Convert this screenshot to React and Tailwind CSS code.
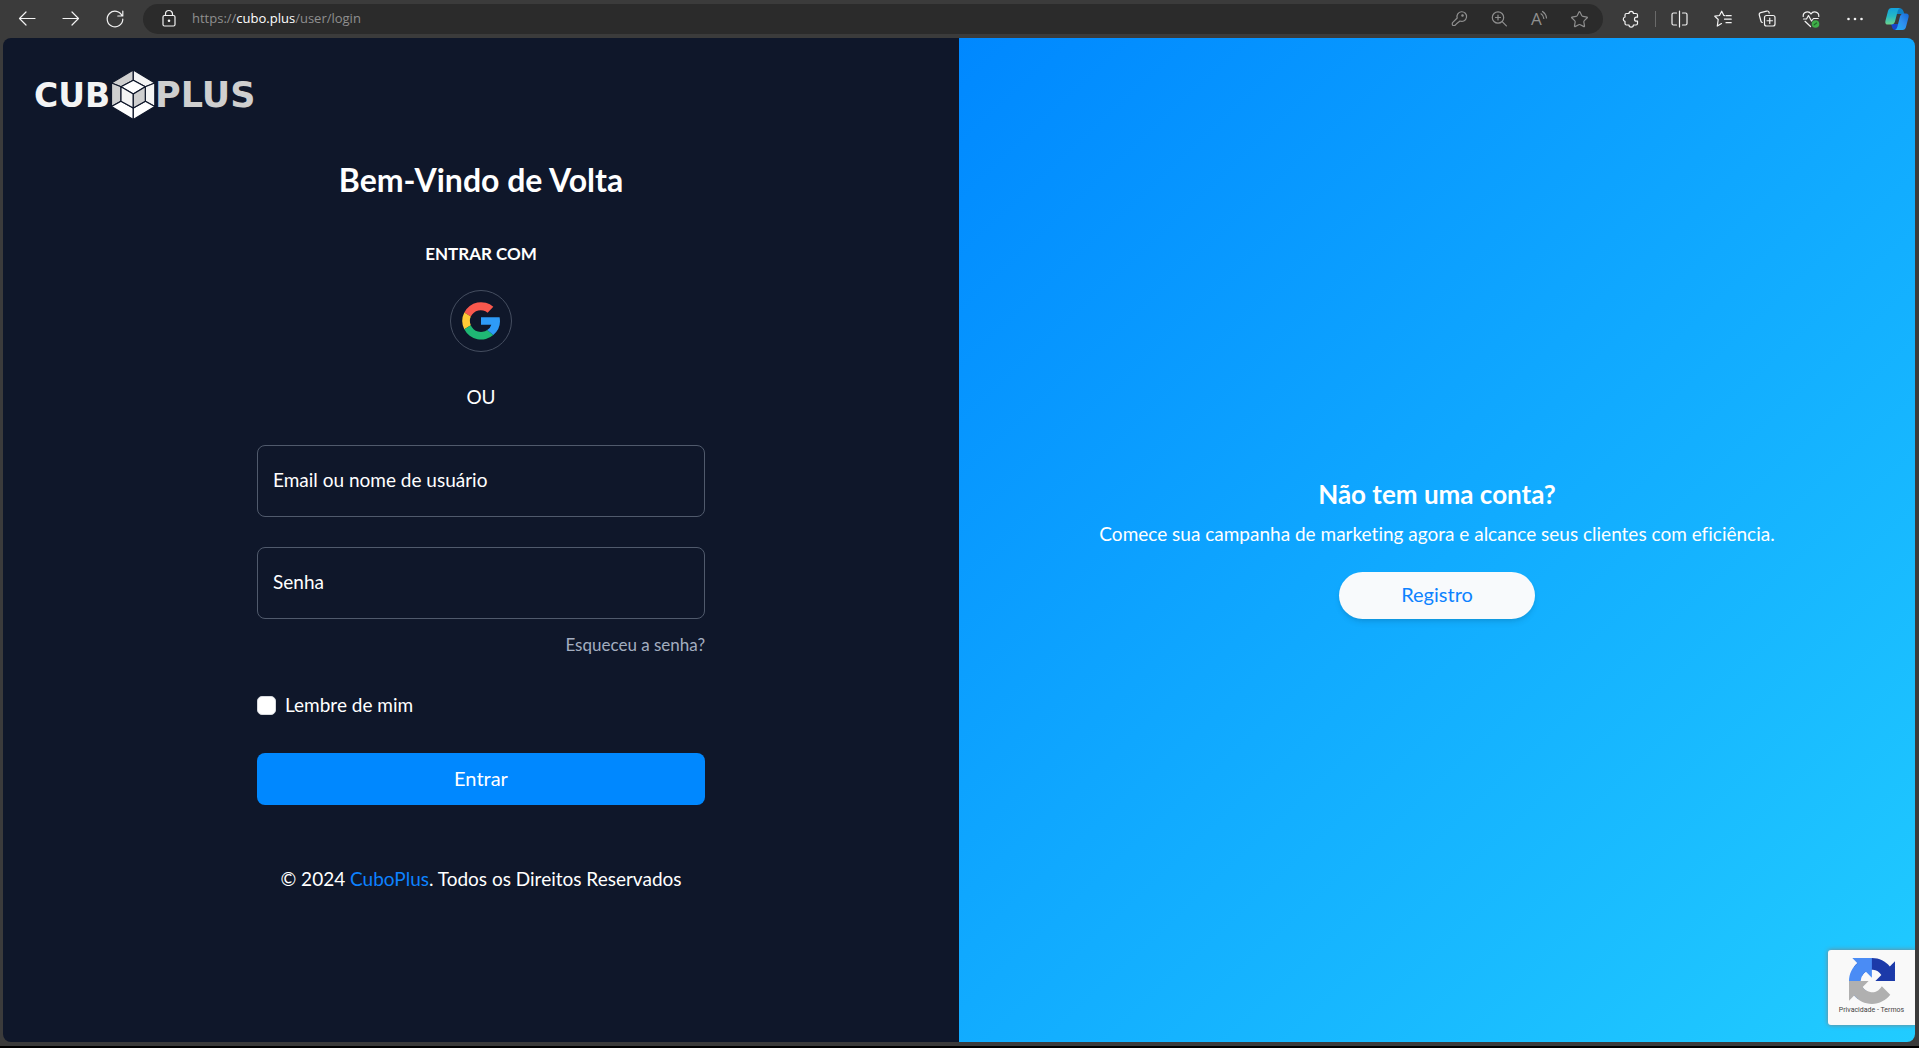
import React, { useState } from 'react';
import { Star } from 'lucide-react';

const Icon = ({ children }) => (
  <svg width="24" height="24" viewBox="0 0 24 24" fill="none" stroke="currentColor" strokeWidth="1.2"
    strokeLinecap="round" strokeLinejoin="round" aria-hidden="true">
    {children}
  </svg>
);

const toolButton = 'flex h-8 w-11 shrink-0 items-center justify-center text-[#f2f2f2]';
const urlButton = 'flex h-8 w-10 shrink-0 items-center justify-center text-[#8f8f8f]';

const BrowserBar = () => (
  <header className="flex h-[38px] shrink-0 items-center pl-[5px] pr-[2px]">
    <button aria-label="Voltar" className={toolButton}>
      <Icon><path d="M20 11.5H4.5M11 5l-6.5 6.5L11 18" /></Icon>
    </button>
    <button aria-label="Avançar" className={toolButton}>
      <Icon><path d="M4 11.5h15.5M13 5l6.5 6.5L13 18" /></Icon>
    </button>
    <button aria-label="Atualizar" className={toolButton}>
      <Icon><path d="M19.2 9A7.8 7.8 0 1 0 19.8 12M19.8 4v5h-5" /></Icon>
    </button>

    {/* Address bar */}
    <div className="ml-[6px] flex h-[30px] min-w-0 flex-1 items-center rounded-full bg-[#2b2b2b] pl-[14px] pr-1">
      <span className="mr-[11px] text-[#f2f2f2]">
        <Icon>
          <rect x="6" y="8.5" width="12" height="10.5" rx="1.5" />
          <path d="M8.5 8.5V7a3.5 3.5 0 0 1 7 0v1.5" />
          <circle cx="12" cy="13.7" r=".7" fill="currentColor" />
        </Icon>
      </span>
      <p className="flex-1 truncate font-['Open_Sans',sans-serif] text-[13px] text-[#8f8f8f]">
        https://<span className="text-white">cubo.plus</span>/user/login
      </p>
      <button aria-label="Senhas" className={urlButton}>
        <Icon>
          <path d="M10.2 11l-4.6 4.6a1 1 0 0 0-.3.7v1.2a1 1 0 0 0 1 1h1.5l1.7-1.7 3.5-2.8a4.8 4.8 0 1 0-2.8-3z" />
          <circle cx="15.5" cy="8.5" r=".7" fill="currentColor" />
        </Icon>
      </button>
      <button aria-label="Zoom" className={urlButton}>
        <Icon>
          <circle cx="11" cy="10.5" r="5.7" />
          <path d="M15.2 14.7l4.2 4.2M11 8v5M8.5 10.5h5" />
        </Icon>
      </button>
      <button aria-label="Ler em voz alta" className={urlButton}>
        <Icon>
          <text x="4" y="18" fontSize="17" fontFamily="Open Sans, sans-serif" fill="currentColor" stroke="none">A</text>
          <path d="M14 6.8a6 6 0 0 1 2.8 4.7M15.5 4.5a9 9 0 0 1 4 6.5" />
        </Icon>
      </button>
      <button aria-label="Adicionar aos favoritos" className={urlButton}>
        <Star size={19} strokeWidth={1.5} />
      </button>
    </div>

    <button aria-label="Extensões" className={`${toolButton} ml-[6px]`}>
      <Icon>
        <path d="M7.5 6.5H10a2.2 2.2 0 0 1 4.4 0H17A1.5 1.5 0 0 1 18.5 8v2.2h-1a2 2 0 0 0 0 4h1v2.3A1.5 1.5 0 0 1 17 18h-2.6a2.2 2.2 0 0 1-4.4 0H7.5A1.5 1.5 0 0 1 6 16.5v-2.2a2.2 2.2 0 0 1 0-4.3V8a1.5 1.5 0 0 1 1.5-1.5z" />
      </Icon>
    </button>
    <span className="ml-[2px] mr-px h-4 w-px shrink-0 bg-[#6a6a6a]"></span>
    <button aria-label="Dividir tela" className={toolButton}>
      <Icon>
        <path d="M9.5 6h-3A1.5 1.5 0 0 0 5 7.5v9A1.5 1.5 0 0 0 6.5 18h3M15.5 6h3A1.5 1.5 0 0 1 20 7.5v9a1.5 1.5 0 0 1-1.5 1.5h-3M12.5 4v16" />
      </Icon>
    </button>
    <button aria-label="Favoritos" className={toolButton}>
      <Icon>
        <path d="M13.5 8.7l-.7-.2-2.1-4.3-2.2 4.3-4.7.7 3.4 3.3-.9 6.6 4.2-2.5M15 8.7h5.2M13.5 12.2h6.7M15 15.7h5.2" />
      </Icon>
    </button>
    <button aria-label="Coleções" className={toolButton}>
      <Icon>
        <rect x="9.5" y="8.5" width="10.5" height="10.5" rx="2" />
        <path d="M14.75 11v5.5M12 13.75h5.5M7.3 15.5A2 2 0 0 1 5.9 14L4.3 8a2 2 0 0 1 1.4-2.4l6-1.5a2 2 0 0 1 2.4 1.4l.1.6" />
      </Icon>
    </button>
    <button aria-label="Desempenho" className={toolButton}>
      <Icon>
        <path d="M4.2 9.5A4.2 4.2 0 0 1 12 7a4.2 4.2 0 0 1 7.8 2.5M4.5 12h3l2-3.5 3 5.5 2-2.5h4.7M6 14.3l5.5 5.2" />
        <circle cx="16.5" cy="17" r="3.8" fill="#3fae49" stroke="none" />
        <path d="M15.2 17.8l2.4-1.8" stroke="#22662a" />
      </Icon>
    </button>
    <button aria-label="Configurações" className={toolButton}>
      <Icon>
        <g fill="currentColor" stroke="none">
          <circle cx="5.5" cy="12" r="1.3" />
          <circle cx="12" cy="12" r="1.3" />
          <circle cx="18.5" cy="12" r="1.3" />
        </g>
      </Icon>
    </button>
    <button aria-label="Copilot" className="flex h-8 w-10 shrink-0 items-center justify-center">
      <svg width="28" height="26" viewBox="0 0 28 26" aria-hidden="true">
        <defs>
          <linearGradient id="cpLeft" x1="0" y1="0" x2="0" y2="1">
            <stop offset="0" stopColor="#12a2e0" />
            <stop offset=".5" stopColor="#25b9c4" />
            <stop offset="1" stopColor="#6cd38c" />
          </linearGradient>
          <linearGradient id="cpRight" x1="1" y1="0" x2="0" y2="1">
            <stop offset="0" stopColor="#1668d8" />
            <stop offset=".5" stopColor="#2f8fee" />
            <stop offset="1" stopColor="#1fb4f5" />
          </linearGradient>
        </defs>
        <path d="M14 2h2q3.5 0 4.5 3.5l.9 2.5H12z" fill="#0f7fc4" />
        <path d="M8 18h7l1.5 6H12q-2.3 0-3-3z" fill="#1744c9" />
        <path d="M8.5 2H17q-1.5.5-2.3 3L12 15.5q-.9 3-3.7 3H5q-3.3 0-2.6-3.6L5 5q.8-3 3.5-3z" fill="url(#cpLeft)" />
        <path d="M19.5 24H12q1.5-.5 2.3-3L17 10.5q.9-3 3.7-3H23q3.3 0 2.6 3.6L23 21q-.8 3-3.5 3z" fill="url(#cpRight)" />
      </svg>
    </button>
  </header>
);

const Logo = () => (
  <svg width="222" height="50" viewBox="0 0 222 50" role="img" aria-label="CuboPlus">
    <g fontFamily="DejaVu Sans, sans-serif" fontWeight="700">
      <text x="-1" y="37" fontSize="33" fill="#f4f4f4">CUB</text>
      <text x="120" y="37" fontSize="35" fill="#cfcfcf">PLUS</text>
    </g>
    <g stroke="#0f172a" strokeWidth="1.2" strokeLinejoin="round">
      <path d="M98.3 0L76.5 13l9.5 3.7 12.3-6.4z" fill="#cfcfcf" />
      <path d="M98.3 0l21.5 13-9.5 3.7-12-6.4z" fill="#f4f4f4" />
      <path d="M76.5 13v23.5l9.5-5.2V16.7z" fill="#cfcfcf" />
      <path d="M119.8 13v23.5l-9.5-5.2V16.7z" fill="#f4f4f4" />
      <path d="M76.5 36.5L98.3 49.5V38L86 31.3z" fill="#fff" />
      <path d="M119.8 36.5L98.3 49.5V38l12-6.7z" fill="#fff" />
      <path d="M98.3 10.3l12 6.4-12 7.3L86 16.7z" fill="#fff" />
      <path d="M86 16.7L98.3 24v14L86 31.3z" fill="#f4f4f4" />
      <path d="M110.3 16.7L98.3 24v14l12-6.7z" fill="#cfcfcf" />
    </g>
  </svg>
);

const GoogleLogo = () => (
  <svg width="38" height="38" viewBox="0 0 38 38" aria-hidden="true">
    <path d="M2.3 10.5A18.7 18.7 0 0 1 31.3 4.8L25.6 10.7A11 11 0 0 0 8.8 14.5z" fill="#f9584d" />
    <path d="M2.3 10.5L8.8 14.5A11 11 0 0 0 8.8 23.2L2.3 27.3A18.7 18.7 0 0 1 2.3 10.5z" fill="#ffca36" />
    <path d="M2.3 27.3L8.8 23.2A11 11 0 0 0 25.2 28L31.3 33A18.7 18.7 0 0 1 2.3 27.3z" fill="#1fb874" />
    <path d="M19 15.2H37.6A18.8 18.8 0 0 1 31.3 33L25.2 28Q28.4 26 29.3 22.7H19z" fill="#2e9bf7" />
  </svg>
);

const Recaptcha = () => (
  <div className="absolute right-0 bottom-[17px] flex h-[75px] w-[87px] flex-col items-center rounded-l-[3px] bg-[#f9f9f9] pt-2 shadow-[0_0_5px_#808080]">
    <svg width="46" height="46" viewBox="0 0 64 64" aria-hidden="true">
      <path d="M64 31.955l-.033-1.37V4.687l-7.16 7.16C50.948 4.674 42.033.093 32.05.093c-10.4 0-19.622 4.96-25.458 12.64l11.736 11.86a15.55 15.55 0 0 1 4.754-5.334c2.05-1.6 4.952-2.906 8.968-2.906.485 0 .86.057 1.135.163 4.976.393 9.288 3.14 11.828 7.124l-8.307 8.307L64 31.953" fill="#1c3aa9" />
      <path d="M31.862.094l-1.37.033H4.594l7.16 7.16C4.58 13.147 0 22.06 0 32.046c0 10.4 4.96 19.622 12.64 25.458L24.5 45.768a15.55 15.55 0 0 1-5.334-4.754c-1.6-2.05-2.906-4.952-2.906-8.968 0-.485.057-.86.163-1.135.393-4.976 3.14-9.288 7.124-11.828l8.307 8.307L31.86.095" fill="#4a8cf5" />
      <path d="M.001 32.045l.033 1.37v25.898l7.16-7.16c5.86 7.173 14.774 11.754 24.76 11.754 10.4 0 19.622-4.96 25.458-12.64l-11.736-11.86a15.55 15.55 0 0 1-4.754 5.334c-2.05 1.6-4.952 2.906-8.968 2.906-.485 0-.86-.057-1.135-.163-4.976-.393-9.288-3.14-11.828-7.124l8.307-8.307c-10.522.04-22.4.066-27.295-.005" fill="#b0b0b0" />
    </svg>
    <p className="font-[Roboto,sans-serif] text-[7px] leading-3 text-[#444]">
      <a href="#privacidade">Privacidade</a> - <a href="#termos">Termos</a>
    </p>
  </div>
);

const inputClass = 'h-[72px] w-full rounded-lg border border-[#505a6c] bg-transparent px-[15px] pb-1 text-[19px] text-white placeholder-white focus:outline-none focus:border-[#0088ff]';

const App = () => {
  const [user, setUser] = useState('');
  const [password, setPassword] = useState('');
  const [remember, setRemember] = useState(false);

  return (
    <div className="flex min-h-screen flex-col border-b-2 border-black bg-[#3b3b3b] pb-1 font-[Lato,sans-serif] [font-variant-ligatures:none]">
      <BrowserBar />

      <main className="mr-1 ml-[3px] grid flex-1 grid-cols-2 overflow-hidden rounded-lg">
        {/* Login */}
        <section className="flex flex-col bg-[#0f172a] px-8 pt-8 text-[19px] leading-7 text-white">
          <a href="#inicio" className="self-start"><Logo /></a>

          <div className="mx-auto flex w-full max-w-md flex-col items-center">
            <h1 className="mt-10 text-[32px] leading-10 font-bold">Bem-Vindo de Volta</h1>
            <p className="mt-[42px] text-[17px] leading-6 font-bold">ENTRAR COM</p>
            <button aria-label="Google"
              className="mt-6 flex h-[62px] w-[62px] items-center justify-center rounded-full border border-[#454e60]">
              <GoogleLogo />
            </button>
            <p className="mt-[31px]">OU</p>

            <form className="mt-[34px] flex w-full flex-col" onSubmit={(e) => e.preventDefault()}>
              <input type="text" aria-label="Email ou nome de usuário" placeholder="Email ou nome de usuário"
                value={user} onChange={(e) => setUser(e.target.value)} className={inputClass} />
              <input type="password" aria-label="Senha" placeholder="Senha"
                value={password} onChange={(e) => setPassword(e.target.value)} className={`${inputClass} mt-[30px]`} />
              <a href="#senha" className="mt-[14px] self-end text-[17px] leading-6 text-[#a3aec0]">Esqueceu a senha?</a>

              <div className="mt-[34px] flex items-center gap-[9px]">
                <input id="remember" type="checkbox" checked={remember}
                  onChange={(e) => setRemember(e.target.checked)}
                  className="h-[19px] w-[19px] appearance-none rounded-[5px] border border-[#d5d8dd] bg-white checked:bg-[#0088ff]" />
                <label htmlFor="remember">Lembre de mim</label>
              </div>

              <button type="submit" className="mt-[34px] h-[52px] w-full rounded-lg bg-[#0088ff] pb-[2px] text-[20px]">
                Entrar
              </button>
            </form>

            <p className="mt-[60px]">
              © 2024 <a href="#cuboplus" className="text-[#0d82ff]">CuboPlus</a>. Todos os Direitos Reservados
            </p>
          </div>
        </section>

        {/* Register */}
        <section className="relative flex flex-col items-center justify-center bg-[linear-gradient(137deg,#0088ff,#21ccff)] pt-4 text-center text-white">
          <h2 className="text-[26px] leading-8 font-bold">Não tem uma conta?</h2>
          <p className="mt-[10px] text-[19px] leading-7">
            Comece sua campanha de marketing agora e alcance seus clientes com eficiência.
          </p>
          <button className="mt-6 h-[47px] w-[196px] rounded-full bg-[#f8fafc] pb-[2px] text-[20px] text-[#0d82ff] shadow-md">
            Registro
          </button>
          <Recaptcha />
        </section>
      </main>
    </div>
  );
};

export default App;
